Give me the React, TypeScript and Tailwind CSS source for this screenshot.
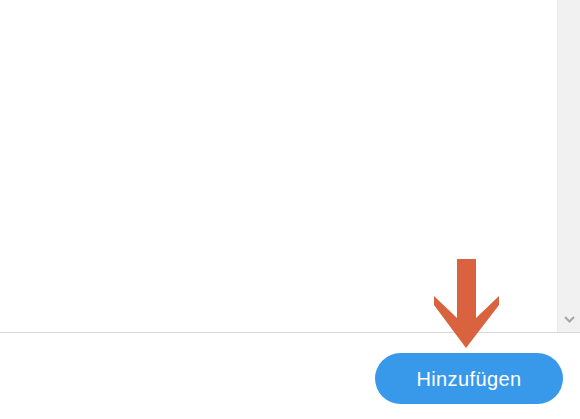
export default function App() {
  return (
    <div className="relative w-[580px] h-[419px] bg-white overflow-hidden" style={{ fontFamily: '"Liberation Sans", Arial, sans-serif' }}>
      {/* Content area with scrollbar */}
      <div className="flex h-[332px]">
        <div className="flex-1 bg-white" />
        <div className="w-[23px] bg-[#f1f1f1] border-l border-[#e9e9e9] flex flex-col justify-end items-center pb-[9px]">
          <svg width="11" height="7" viewBox="0 0 11 7">
            <path d="M1 1 L5.5 5.5 L10 1" fill="none" stroke="#a6a6a6" strokeWidth="2" />
          </svg>
        </div>
      </div>

      {/* Footer */}
      <div className="border-t border-[#d8d8d8] h-[87px] flex justify-end pt-[20px] pr-[17px]">
        <button className="w-[188px] h-[51px] rounded-full bg-[#3899ea] text-white text-[20px] leading-none tracking-[0.4px] pt-[1px]">
          Hinzufügen
        </button>
      </div>

      {/* Annotation arrow */}
      <svg className="absolute left-[430px] top-[255px]" width="75" height="100" viewBox="430 255 75 100">
        <polygon
          points="457,259 476,259 476,318 499,296 499,305 466,348 434,305 434,296 457,318"
          fill="#d9623f"
        />
      </svg>
    </div>
  );
}
